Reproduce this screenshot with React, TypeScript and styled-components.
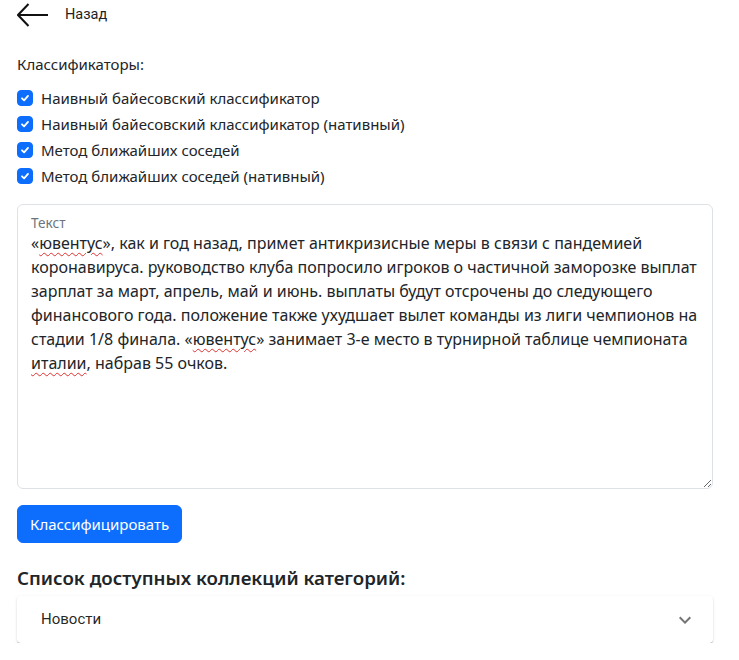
import React, { useState } from "react";
import styled, { createGlobalStyle } from "styled-components";

const GlobalStyle = createGlobalStyle`
  * { box-sizing: border-box; }
  body {
    margin: 0;
    background: #fff;
    color: #212529;
    font-family: "Noto Sans", "Open Sans", sans-serif;
    font-size: 15px;
    line-height: 1.5;
  }
`;

const Page = styled.div`
  padding: 0 26px 0 17px;
`;

const BackBar = styled.div`
  display: flex;
  align-items: center;
  gap: 16px;
  height: 30px;
  font-family: Roboto, sans-serif;
  font-size: 14.5px;
  color: #1f1f1f;
  cursor: pointer;
`;

const SectionLabel = styled.div`
  margin-top: 22px;
  margin-bottom: 10px;
  line-height: 24px;
`;

const CheckRow = styled.label`
  display: flex;
  align-items: center;
  gap: 8px;
  min-height: 24px;
  margin-bottom: 2px;
  cursor: pointer;
`;

const CheckBox = styled.span<{ $checked: boolean }>`
  width: 16px;
  height: 16px;
  border-radius: 4px;
  flex: none;
  display: flex;
  align-items: center;
  justify-content: center;
  background: ${({ $checked }) => ($checked ? "#0d6efd" : "#fff")};
  border: 1px solid ${({ $checked }) => ($checked ? "#0d6efd" : "#dee2e6")};
`;

const Field = styled.div`
  margin-top: 16px;
  height: 285px;
  border: 1px solid #dee2e6;
  border-radius: 6px;
  padding: 9px 12px 0 13px;
  position: relative;
  resize: both;
  overflow: hidden;
`;

const FieldLabel = styled.div`
  font-size: 13.6px;
  line-height: 18px;
  color: #6c757d;
  height: 17px;
`;

const FieldText = styled.div`
  font-size: 16px;
  line-height: 24px;
  white-space: nowrap;
`;

const Typo = styled.span`
  text-decoration: underline wavy #e03030;
  text-decoration-thickness: 1px;
  text-underline-offset: 3px;
`;

const PrimaryButton = styled.button`
  margin-top: 16px;
  display: inline-block;
  height: 38px;
  padding: 6px 12px;
  border: 1px solid #0d6efd;
  border-radius: 6px;
  background: #0d6efd;
  color: #fff;
  font-family: inherit;
  font-size: 15px;
  line-height: 24px;
  cursor: pointer;
`;

const Heading = styled.h5`
  margin: 23px 0 6px;
  font-size: 18.7px;
  font-weight: 600;
  line-height: 24px;
`;

const Accordion = styled.div`
  border-radius: 4px;
  background: #fff;
  box-shadow: 0px 2px 1px -1px rgba(0, 0, 0, 0.2), 0px 1px 1px 0px rgba(0, 0, 0, 0.14),
    0px 1px 3px 0px rgba(0, 0, 0, 0.12);
`;

const AccordionSummary = styled.div`
  display: flex;
  align-items: center;
  justify-content: space-between;
  height: 47px;
  padding: 0 16px 0 24px;
  font-family: Roboto, sans-serif;
  font-size: 15px;
  color: rgba(0, 0, 0, 0.87);
  cursor: pointer;
`;

const classifiers = [
  "Наивный байесовский классификатор",
  "Наивный байесовский классификатор (нативный)",
  "Метод ближайших соседей",
  "Метод ближайших соседей (нативный)",
];

export default function App() {
  const [checked, setChecked] = useState(classifiers.map(() => true));

  return (
    <Page>
      <GlobalStyle />
      <BackBar>
        <svg width="32" height="26" viewBox="0 0 32 26" fill="none" stroke="#111" strokeWidth="2">
          <path d="M31 13H1M11.5 2L1 13l10.5 11" />
        </svg>
        Назад
      </BackBar>

      <SectionLabel>Классификаторы:</SectionLabel>
      {classifiers.map((c, i) => (
        <CheckRow
          key={c}
          onClick={() => setChecked(checked.map((v, j) => (j === i ? !v : v)))}
        >
          <CheckBox $checked={checked[i]}>
            {checked[i] && (
              <svg width="12" height="12" viewBox="0 0 20 20" fill="none" stroke="#fff" strokeWidth="3" strokeLinecap="round" strokeLinejoin="round">
                <path d="M5 10.5l3.5 3.5L15 6.5" />
              </svg>
            )}
          </CheckBox>
          {c}
        </CheckRow>
      ))}

      <Field>
        <FieldLabel>Текст</FieldLabel>
        <FieldText>
          <div>«<Typo>ювентус</Typo>», как и год назад, примет антикризисные меры в связи с пандемией</div>
          <div>коронавируса. руководство клуба попросило игроков о частичной заморозке выплат</div>
          <div>зарплат за март, апрель, май и июнь. выплаты будут отсрочены до следующего</div>
          <div>финансового года. положение также ухудшает вылет команды из лиги чемпионов на</div>
          <div>стадии 1/8 финала. «<Typo>ювентус</Typo>» занимает 3-е место в турнирной таблице чемпионата</div>
          <div><Typo>италии</Typo>, набрав 55 очков.</div>
        </FieldText>
      </Field>

      <PrimaryButton>Классифицировать</PrimaryButton>

      <Heading>Список доступных коллекций категорий:</Heading>
      <Accordion>
        <AccordionSummary>
          Новости
          <svg width="24" height="24" viewBox="0 0 24 24" fill="#757575">
            <path d="M16.59 8.59 12 13.17 7.41 8.59 6 10l6 6 6-6z" />
          </svg>
        </AccordionSummary>
      </Accordion>
    </Page>
  );
}
